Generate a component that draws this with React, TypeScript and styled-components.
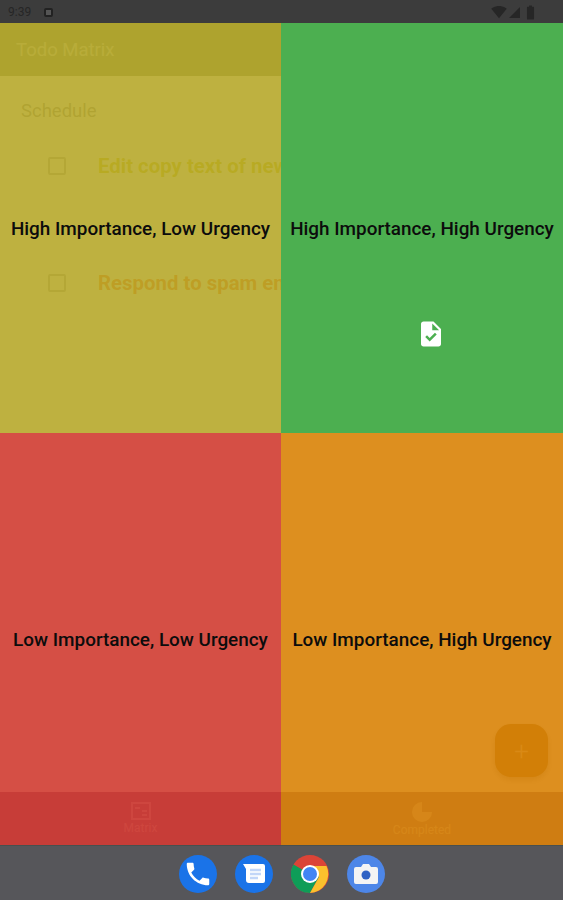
import React from "react";
import styled, { createGlobalStyle } from "styled-components";
import { MdTask, MdPhone, MdSignalWifi4Bar, MdSignalCellular4Bar, MdBatteryFull } from "react-icons/md";

const GlobalStyle = createGlobalStyle`
  html, body {
    margin: 0;
    padding: 0;
    background: #56565a;
  }
  * {
    box-sizing: border-box;
  }
  body {
    font-family: Roboto, "Liberation Sans", sans-serif;
  }
`;

const Page = styled.div`
  width: 563px;
  height: 900px;
  display: flex;
  flex-direction: column;
  overflow: hidden;
`;

const StatusBar = styled.div`
  height: 23px;
  flex: none;
  display: flex;
  align-items: center;
  justify-content: space-between;
  padding: 1px 24px 0 8px;
  background: #3c3c3c;
  color: #262626;
  font-size: 12px;
`;

const StatusGroup = styled.div`
  display: flex;
  align-items: center;
  gap: ${(props: { $gap: number }) => props.$gap}px;
`;

const NotifyDot = styled.span`
  width: 9px;
  height: 9px;
  border-radius: 2px;
  border: 2px solid #222;
  background: #555;
`;

const Screen = styled.div`
  position: relative;
  flex: 1;
  min-height: 0;
`;

const AppLayer = styled.div`
  height: 100%;
  display: flex;
  flex-direction: column;
  background: #fff;
`;

const AppBar = styled.div`
  height: 53px;
  flex: none;
  display: flex;
  align-items: center;
  padding-left: 16px;
  background: #7b8f6c;
  color: rgba(255, 255, 255, 0.65);
  font-size: 18.5px;
  font-weight: 400;
`;

const Content = styled.div`
  flex: 1;
  padding: 23px 0 0 21px;
`;

const SectionTitle = styled.div`
  color: #8a8a8a;
  font-size: 18.5px;
  line-height: 24px;
  margin-bottom: 31px;
`;

const TodoRow = styled.div`
  display: flex;
  align-items: center;
  height: 24px;
  margin-bottom: 93px;
  padding-left: 27px;
  white-space: nowrap;
`;

const Check = styled.span`
  width: 18px;
  height: 18px;
  flex: none;
  border: 2px solid #aaa;
  border-radius: 2px;
  margin-right: 32px;
`;

const TodoText = styled.span<{ $color: string }>`
  color: ${(props) => props.$color};
  font-size: 20.4px;
  font-weight: 700;
`;

const BottomNav = styled.div`
  height: 53px;
  flex: none;
  display: grid;
  grid-template-columns: 281px 282px;
  background: #8a6e90;
  color: rgba(255, 255, 255, 0.5);
`;

const NavItem = styled.div`
  display: flex;
  flex-direction: column;
  align-items: center;
  padding-top: 10px;
  font-size: 12px;
  line-height: 14px;
  gap: 1px;
`;

const Fab = styled.div`
  position: absolute;
  right: 15px;
  bottom: 68px;
  width: 53px;
  height: 53px;
  border-radius: 16px;
  display: flex;
  align-items: center;
  justify-content: center;
  background: #a07c38;
  color: rgba(255, 255, 255, 0.6);
  font-size: 26px;
  font-weight: 300;
  box-shadow: 0 3px 6px rgba(0, 0, 0, 0.3);
`;

const QuadrantGrid = styled.div`
  position: absolute;
  inset: 0;
  display: grid;
  grid-template-columns: 281px 282px;
  grid-template-rows: 410px 412px;
`;

const Quadrant = styled.div<{ $bg: string }>`
  position: relative;
  display: flex;
  align-items: center;
  justify-content: center;
  padding-top: 1px;
  background: ${(props) => props.$bg};
  color: #0c0c0c;
  font-size: 18.9px;
  font-weight: 500;
  white-space: nowrap;
`;

const DragIcon = styled.div`
  position: absolute;
  left: 135px;
  top: 296px;
  display: flex;
  color: #fff;
`;

const Dock = styled.div`
  height: 55px;
  flex: none;
  display: flex;
  align-items: center;
  justify-content: center;
  gap: 18px;
  padding-top: 2px;
  background: #56565a;
  border-top: 1px solid #48504f;
`;

const DockIcon = styled.div<{ $bg: string }>`
  width: 38px;
  height: 38px;
  border-radius: 50%;
  display: flex;
  align-items: center;
  justify-content: center;
  background: ${(props) => props.$bg};
  color: #fff;
`;

const ChromeIcon = () => (
  <svg width="38" height="38" viewBox="0 0 38 38">
    <circle cx="19" cy="19" r="19" fill="#db4437" />
    <path d="M19 19 L2.5 9.5 A19 19 0 0 0 19 38 L28.5 21 Z" fill="#0f9d58" />
    <path d="M19 11 H35.5 A19 19 0 0 1 19 38 L28 22 Z" fill="#fbc02d" />
    <circle cx="19" cy="19" r="9" fill="#fff" />
    <circle cx="19" cy="19" r="7" fill="#4285f4" />
  </svg>
);

const MessagesGlyph = () => (
  <svg width="24" height="22" viewBox="0 0 24 22">
    <path d="M1 1 H21 a2 2 0 0 1 2 2 V18 a2 2 0 0 1 -2 2 H7 a3 3 0 0 1 -3 -3 V6 Z" fill="#fff" />
    <path d="M8 7 H19 M8 11 H19 M8 15 H16" stroke="#c2d6f8" strokeWidth="2.4" />
  </svg>
);

const CameraGlyph = () => (
  <svg width="26" height="24" viewBox="0 0 26 24">
    <path d="M3 5 H8 L10 2 H16 L18 5 H23 a2 2 0 0 1 2 2 V20 a2 2 0 0 1 -2 2 H3 a2 2 0 0 1 -2 -2 V7 a2 2 0 0 1 2 -2 Z" fill="#f4f4f4" />
    <circle cx="13" cy="13" r="4.5" fill="#2f62c4" />
  </svg>
);

const MatrixGlyph = () => (
  <svg width="20" height="18" viewBox="0 0 20 18" fill="none" stroke="currentColor" strokeWidth="2">
    <rect x="1" y="1" width="18" height="16" />
    <path d="M4 6 H9 M11 9 H16 M11 13 H16" />
  </svg>
);

const PieGlyph = () => (
  <svg width="20" height="20" viewBox="0 0 20 20">
    <path d="M10 0 a10 10 0 1 0 10 10 H10 Z" fill="currentColor" />
  </svg>
);

export default function App() {
  return (
    <Page>
      <GlobalStyle />
      <StatusBar>
        <StatusGroup $gap={13}>
          <span>9:39</span>
          <NotifyDot />
        </StatusGroup>
        <StatusGroup $gap={1}>
          <MdSignalWifi4Bar size={16} />
          <MdSignalCellular4Bar size={13} />
          <MdBatteryFull size={17} />
        </StatusGroup>
      </StatusBar>
      <Screen>
        <AppLayer>
          <AppBar>Todo Matrix</AppBar>
          <Content>
            <SectionTitle>Schedule</SectionTitle>
            <TodoRow>
              <Check />
              <TodoText $color="#c8c410">Edit copy text of new landing page</TodoText>
            </TodoRow>
            <TodoRow>
              <Check />
              <TodoText $color="#ff6420">Respond to spam emails</TodoText>
            </TodoRow>
          </Content>
          <BottomNav>
            <NavItem>
              <MatrixGlyph />
              Matrix
            </NavItem>
            <NavItem>
              <PieGlyph />
              Completed
            </NavItem>
          </BottomNav>
          <Fab>+</Fab>
        </AppLayer>
        <QuadrantGrid>
          <Quadrant $bg="rgba(181, 166, 38, 0.88)">High Importance, Low Urgency</Quadrant>
          <Quadrant $bg="#4caf50">
            High Importance, High Urgency
            <DragIcon>
              <MdTask size={30} />
            </DragIcon>
          </Quadrant>
          <Quadrant $bg="rgba(207, 55, 43, 0.88)">Low Importance, Low Urgency</Quadrant>
          <Quadrant $bg="rgba(216, 127, 0, 0.88)">Low Importance, High Urgency</Quadrant>
        </QuadrantGrid>
      </Screen>
      <Dock>
        <DockIcon $bg="#1a73e8">
          <MdPhone size={30} />
        </DockIcon>
        <DockIcon $bg="#1a73e8">
          <MessagesGlyph />
        </DockIcon>
        <ChromeIcon />
        <DockIcon $bg="#4d86e8">
          <CameraGlyph />
        </DockIcon>
      </Dock>
    </Page>
  );
}
